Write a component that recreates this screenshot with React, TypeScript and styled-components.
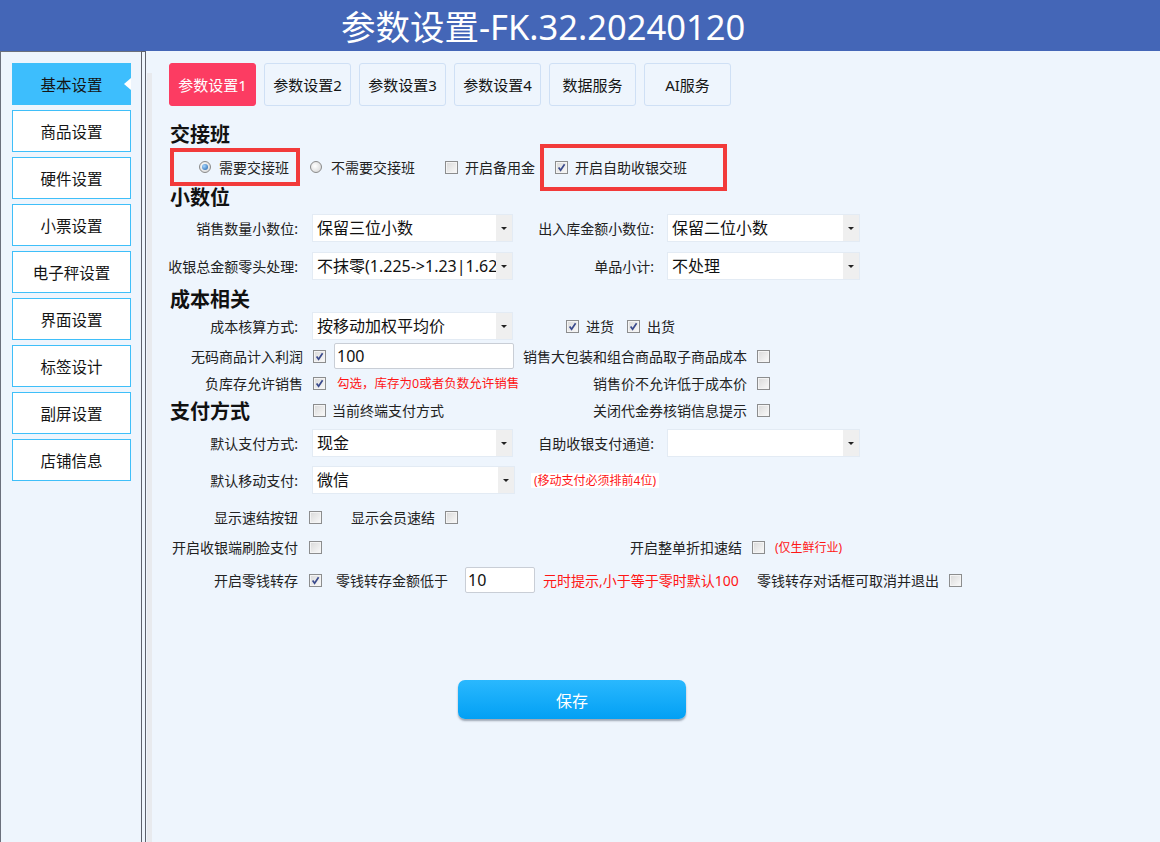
import styled, { createGlobalStyle } from "styled-components";

const GlobalStyle = createGlobalStyle`
  html, body {
    margin: 0;
    padding: 0;
  }
  body {
    background: #eef5fd;
    font-family: "Noto Sans", "Noto Sans CJK SC", sans-serif;
    color: #1e1e1e;
  }
  * {
    box-sizing: border-box;
  }
`;

const Page = styled.div`
  width: 1160px;
  height: 842px;
  display: flex;
  flex-direction: column;
  overflow: hidden;
`;

const Header = styled.header`
  height: 51px;
  flex-shrink: 0;
  background: #4466b7;
  color: #fff;
  font-size: 34.5px;
  line-height: 53px;
  padding-left: 341px;
  white-space: nowrap;
`;

const Body = styled.div`
  flex: 1;
  display: flex;
  min-height: 0;
`;

const Sidebar = styled.nav`
  width: 141px;
  flex-shrink: 0;
  border-left: 1px solid #6b707c;
  border-top: 1px solid #6b707c;
  background: #eef5fd;
  padding: 11px 0 0 11px;
  display: flex;
  flex-direction: column;
  gap: 5px;
`;

const NavItem = styled.div<{ $active?: boolean }>`
  position: relative;
  width: 119px;
  height: 42px;
  flex-shrink: 0;
  border: 1px solid #3fbff9;
  background: ${(p) => (p.$active ? "#3dbefd" : "#fff")};
  display: flex;
  align-items: center;
  justify-content: center;
  font-size: 15.5px;
  color: #151515;

  &::after {
    content: "";
    display: ${(p) => (p.$active ? "block" : "none")};
    position: absolute;
    right: -1px;
    top: 50%;
    margin-top: -6px;
    border-top: 6px solid transparent;
    border-bottom: 6px solid transparent;
    border-right: 7px solid #fff;
  }
`;

const Divider = styled.div`
  width: 5px;
  flex-shrink: 0;
  border-left: 1px solid #5d616c;
  border-right: 1px solid #5d616c;
  border-top: 1px solid #5d616c;
  background: #eef5fd;
`;

const Content = styled.main`
  flex: 1;
  padding: 12px 0 0 23px;
  background: linear-gradient(#e8eaee, #e8eaee) 1px 22px / 5px 100% no-repeat,
    #eef5fd;
`;

const Tabs = styled.div`
  display: flex;
  gap: 8px;
`;

const Tab = styled.div<{ $active?: boolean }>`
  width: 87px;
  height: 43px;
  display: flex;
  align-items: center;
  justify-content: center;
  font-size: 15px;
  border-radius: 3px;
  border: 1px solid ${(p) => (p.$active ? "#fc3c62" : "#cfe0f5")};
  background: ${(p) => (p.$active ? "#fc3c62" : "#eef5fd")};
  color: ${(p) => (p.$active ? "#fff" : "#151515")};
`;

const Form = styled.div`
  display: flex;
  flex-direction: column;
  margin-left: 1px;
`;

const Heading = styled.h2<{ $mt: number; $w?: number }>`
  margin: ${(p) => p.$mt}px 0 0 0;
  height: 24px;
  width: ${(p) => (p.$w ? `${p.$w}px` : "auto")};
  flex-shrink: 0;
  font-size: 20px;
  line-height: 24px;
  font-weight: bold;
  color: #111;
`;

const Row = styled.div<{ $h: number; $mt: number }>`
  display: flex;
  align-items: center;
  height: ${(p) => p.$h}px;
  margin-top: ${(p) => p.$mt}px;
`;

const FieldLabel = styled.span<{ $w: number; $mr: number }>`
  width: ${(p) => p.$w}px;
  margin-right: ${(p) => p.$mr}px;
  flex-shrink: 0;
  display: flex;
  justify-content: flex-end;
  white-space: nowrap;
  font-size: 14px;
  color: #222;
`;

const Text = styled.span<{ $ml?: number; $w?: number }>`
  margin-left: ${(p) => p.$ml ?? 0}px;
  width: ${(p) => (p.$w ? `${p.$w}px` : "auto")};
  flex-shrink: 0;
  white-space: nowrap;
  font-size: 14px;
  color: #222;
`;

const Hint = styled.span<{ $ml: number; $size: number; $w?: number; $boxed?: boolean }>`
  margin-left: ${(p) => p.$ml}px;
  width: ${(p) => (p.$w ? `${p.$w}px` : "auto")};
  flex-shrink: 0;
  white-space: nowrap;
  font-size: ${(p) => p.$size}px;
  line-height: 15px;
  color: #ff1616;
  background: ${(p) => (p.$boxed ? "#fff" : "transparent")};
  padding: ${(p) => (p.$boxed ? "0 3px" : "0")};
`;

const Marked = styled.div<{ $w: number; $h: number; $pl: number; $ml?: number }>`
  width: ${(p) => p.$w}px;
  height: ${(p) => p.$h}px;
  margin: ${(p) => -(p.$h - 38) / 2}px 0 ${(p) => -(p.$h - 38) / 2}px
    ${(p) => p.$ml ?? 0}px;
  flex-shrink: 0;
  border: 4px solid #f23a3a;
  padding-left: ${(p) => p.$pl}px;
  display: flex;
  align-items: center;
`;

const SelectBox = styled.div<{ $w: number }>`
  width: ${(p) => p.$w}px;
  height: 28px;
  flex-shrink: 0;
  display: flex;
  background: #fff;
  border: 1px solid #e3ebf4;
`;

const SelectValue = styled.span`
  flex: 1;
  min-width: 0;
  overflow: hidden;
  white-space: nowrap;
  padding-left: 4px;
  font-size: 16px;
  line-height: 26px;
  color: #111;
`;

const SelectArrow = styled.span`
  width: 16px;
  background: #efefef;
  display: flex;
  align-items: center;
  justify-content: center;

  &::after {
    content: "";
    border-left: 3px solid transparent;
    border-right: 3px solid transparent;
    border-top: 3px solid #222;
  }
`;

const TextField = styled.div<{ $w: number; $ml: number }>`
  width: ${(p) => p.$w}px;
  height: 26px;
  margin-left: ${(p) => p.$ml}px;
  flex-shrink: 0;
  background: #fff;
  border: 1px solid #c9ced6;
  border-radius: 2px;
  padding-left: 2px;
  font-size: 16px;
  line-height: 24px;
  color: #111;
`;

const CheckBox = styled.span<{ $ml?: number }>`
  width: 13px;
  height: 13px;
  margin-left: ${(p) => p.$ml ?? 0}px;
  flex-shrink: 0;
  border: 1px solid #8c8d8e;
  box-shadow: inset 0 0 0 1px #f4f4f4;
  background: linear-gradient(135deg, #d9d9d9, #fafafa);
  display: flex;
  align-items: center;
  justify-content: center;
`;

const RadioDot = styled.span<{ $on?: boolean; $ml?: number }>`
  width: 12px;
  height: 12px;
  margin-left: ${(p) => p.$ml ?? 0}px;
  flex-shrink: 0;
  border-radius: 50%;
  border: 1px solid #8a8a8a;
  background: radial-gradient(circle at 40% 40%, #fff, #d2d2d2);
  display: flex;
  align-items: center;
  justify-content: center;

  &::after {
    content: "";
    width: 6px;
    height: 6px;
    border-radius: 50%;
    background: ${(p) =>
      p.$on
        ? "radial-gradient(circle at 35% 35%, #a6d6ff, #1c5ea8)"
        : "transparent"};
  }
`;

const SaveButton = styled.button`
  margin: 87px 0 0 288px;
  width: 228px;
  height: 39px;
  border: none;
  border-radius: 7px;
  background: linear-gradient(#2ab8fe, #02a0f4);
  box-shadow: 0 2px 2px rgba(60, 70, 90, 0.45);
  color: #fff;
  font-family: "Noto Sans", "Noto Sans CJK SC", sans-serif;
  font-size: 16px;
`;

function Check({ on, ml }: { on?: boolean; ml?: number }) {
  return (
    <CheckBox $ml={ml}>
      {on && (
        <svg width="9" height="9" viewBox="0 0 9 9">
          <path
            d="M1.6 4.4 L3.6 7.2 L7.6 1.2"
            stroke="#3a4a8c"
            strokeWidth="1.7"
            fill="none"
          />
        </svg>
      )}
    </CheckBox>
  );
}

function Select({ w, value }: { w: number; value: string }) {
  return (
    <SelectBox $w={w}>
      <SelectValue>{value}</SelectValue>
      <SelectArrow />
    </SelectBox>
  );
}

const navItems = [
  "基本设置",
  "商品设置",
  "硬件设置",
  "小票设置",
  "电子秤设置",
  "界面设置",
  "标签设计",
  "副屏设置",
  "店铺信息",
];

const tabs = ["参数设置1", "参数设置2", "参数设置3", "参数设置4", "数据服务", "AI服务"];

export default function App() {
  return (
    <Page>
      <GlobalStyle />
      <Header>参数设置-FK.32.20240120</Header>
      <Body>
        <Sidebar>
          {navItems.map((n, i) => (
            <NavItem key={n} $active={i === 0}>
              {n}
            </NavItem>
          ))}
        </Sidebar>
        <Divider />
        <Content>
          <Tabs>
            {tabs.map((t, i) => (
              <Tab key={t} $active={i === 0}>
                {t}
              </Tab>
            ))}
          </Tabs>
          <Form>
            <Heading $mt={17}>交接班</Heading>
            <Row $h={38} $mt={1}>
              <Marked $w={130} $h={38} $pl={25}>
                <RadioDot $on />
                <Text $ml={8}>需要交接班</Text>
              </Marked>
              <RadioDot $ml={10} />
              <Text $ml={9}>不需要交接班</Text>
              <Check ml={30} />
              <Text $ml={7}>开启备用金</Text>
              <Marked $w={187} $h={47} $pl={11} $ml={5}>
                <Check on />
                <Text $ml={7}>开启自助收银交班</Text>
              </Marked>
            </Row>

            <Heading $mt={0}>小数位</Heading>
            <Row $h={28} $mt={4}>
              <FieldLabel $w={128} $mr={14}>销售数量小数位:</FieldLabel>
              <Select w={201} value="保留三位小数" />
              <FieldLabel $w={141} $mr={13}>出入库金额小数位:</FieldLabel>
              <Select w={193} value="保留二位小数" />
            </Row>
            <Row $h={28} $mt={10}>
              <FieldLabel $w={128} $mr={14}>收银总金额零头处理:</FieldLabel>
              <Select w={201} value="不抹零(1.225->1.23|1.62" />
              <FieldLabel $w={141} $mr={13}>单品小计:</FieldLabel>
              <Select w={193} value="不处理" />
            </Row>

            <Heading $mt={8}>成本相关</Heading>
            <Row $h={28} $mt={0}>
              <FieldLabel $w={128} $mr={14}>成本核算方式:</FieldLabel>
              <Select w={201} value="按移动加权平均价" />
              <Check on ml={53} />
              <Text $ml={7}>进货</Text>
              <Check on ml={13} />
              <Text $ml={7}>出货</Text>
            </Row>
            <Row $h={26} $mt={3}>
              <FieldLabel $w={133} $mr={10}>无码商品计入利润</FieldLabel>
              <Check on />
              <TextField $w={180} $ml={8}>100</TextField>
              <FieldLabel $w={233} $mr={10}>销售大包装和组合商品取子商品成本</FieldLabel>
              <Check />
            </Row>
            <Row $h={20} $mt={4}>
              <FieldLabel $w={133} $mr={10}>负库存允许销售</FieldLabel>
              <Check on />
              <Hint $ml={11} $size={12.5} $w={177}>
                勾选，库存为0或者负数允许销售
              </Hint>
              <FieldLabel $w={233} $mr={10}>销售价不允许低于成本价</FieldLabel>
              <Check />
            </Row>
            <Row $h={24} $mt={5}>
              <Heading $mt={3} $w={143}>支付方式</Heading>
              <Check />
              <Text $ml={6} $w={182}>当前终端支付方式</Text>
              <FieldLabel $w={233} $mr={10}>关闭代金券核销信息提示</FieldLabel>
              <Check />
            </Row>
            <Row $h={28} $mt={7}>
              <FieldLabel $w={128} $mr={14}>默认支付方式:</FieldLabel>
              <Select w={201} value="现金" />
              <FieldLabel $w={141} $mr={13}>自助收银支付通道:</FieldLabel>
              <Select w={193} value="" />
            </Row>
            <Row $h={28} $mt={9}>
              <FieldLabel $w={128} $mr={14}>默认移动支付:</FieldLabel>
              <Select w={203} value="微信" />
              <Hint $ml={16} $size={12} $boxed>
                (移动支付必须排前4位)
              </Hint>
            </Row>
            <Row $h={20} $mt={13}>
              <FieldLabel $w={128} $mr={11}>显示速结按钮</FieldLabel>
              <Check />
              <FieldLabel $w={113} $mr={10}>显示会员速结</FieldLabel>
              <Check />
            </Row>
            <Row $h={20} $mt={10}>
              <FieldLabel $w={128} $mr={11}>开启收银端刷脸支付</FieldLabel>
              <Check />
              <FieldLabel $w={420} $mr={10}>开启整单折扣速结</FieldLabel>
              <Check />
              <Hint $ml={10} $size={12}>
                (仅生鲜行业)
              </Hint>
            </Row>
            <Row $h={26} $mt={10}>
              <FieldLabel $w={128} $mr={11}>开启零钱转存</FieldLabel>
              <Check on />
              <Text $ml={14}>零钱转存金额低于</Text>
              <TextField $w={70} $ml={17}>10</TextField>
              <Hint $ml={8} $size={14} $w={214}>
                元时提示,小于等于零时默认100
              </Hint>
              <Text>零钱转存对话框可取消并退出</Text>
              <Check ml={10} />
            </Row>
            <div>
              <SaveButton>保存</SaveButton>
            </div>
          </Form>
        </Content>
      </Body>
    </Page>
  );
}
